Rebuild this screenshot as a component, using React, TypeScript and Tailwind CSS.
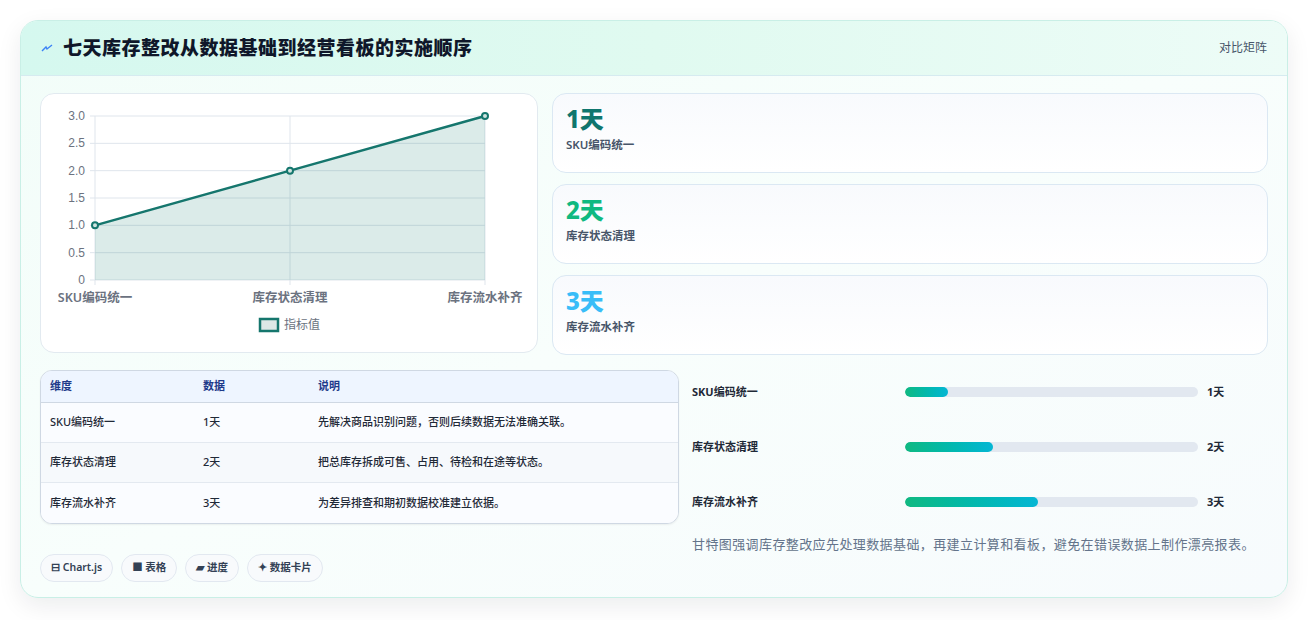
import React from "react";

const F = { fontFamily: '"Noto Sans", "Noto Sans CJK SC", sans-serif' };

function Chart() {
  const x0 = 54, x1 = 444, yTop = 22, yBot = 186;
  const ys = [3, 2.5, 2, 1.5, 1, 0.5, 0];
  const yp = (v: number) => yBot - (v / 3) * (yBot - yTop);
  const xs = [x0, (x0 + x1) / 2, x1];
  const vals = [1, 2, 3];
  const pts = xs.map((x, i) => `${x},${yp(vals[i])}`).join(" ");
  return (
    <svg width="498" height="260" className="block">
      {ys.map((v) => (
        <g key={v}>
          <line x1={x0 - 5} x2={x1} y1={yp(v)} y2={yp(v)} stroke="#dfe5ec" strokeWidth="1" />
          <text x={x0 - 10} y={yp(v) + 4} textAnchor="end" fontSize="12" fill="#6b7280" fontFamily="Liberation Sans, sans-serif">
            {v === 0 ? "0" : v.toFixed(1)}
          </text>
        </g>
      ))}
      {xs.map((x) => (
        <line key={x} x1={x} x2={x} y1={yTop} y2={yBot + 5} stroke="#dfe5ec" strokeWidth="1" />
      ))}
      <polygon points={`${x0},${yBot} ${pts} ${x1},${yBot}`} fill="rgba(15,118,110,0.15)" />
      <polyline points={pts} fill="none" stroke="#15766d" strokeWidth="2.5" />
      {xs.map((x, i) => (
        <circle key={i} cx={x} cy={yp(vals[i])} r="3" fill="#cfe3df" stroke="#15766d" strokeWidth="2" />
      ))}
      {["SKU编码统一", "库存状态清理", "库存流水补齐"].map((t, i) => (
        <text key={t} x={xs[i]} y={208} textAnchor="middle" fontSize="12.5" fontWeight="600" fill="#6b7280" fontFamily='"Noto Sans", "Noto Sans CJK SC", sans-serif'>
          {t}
        </text>
      ))}
      <rect x="219" y="225" width="18" height="12" fill="#dde8e6" stroke="#15766d" strokeWidth="2.5" />
      <text x="243" y="235" fontSize="12" fill="#6b7280" fontFamily='"Noto Sans", "Noto Sans CJK SC", sans-serif'>指标值</text>
    </svg>
  );
}

const stats = [
  { v: "1天", l: "SKU编码统一", c: "text-[#0f766e]" },
  { v: "2天", l: "库存状态清理", c: "text-[#10b981]" },
  { v: "3天", l: "库存流水补齐", c: "text-[#38bdf8]" },
];
const rows = [
  ["SKU编码统一", "1天", "先解决商品识别问题，否则后续数据无法准确关联。"],
  ["库存状态清理", "2天", "把总库存拆成可售、占用、待检和在途等状态。"],
  ["库存流水补齐", "3天", "为差异排查和期初数据校准建立依据。"],
];
const bars = [
  ["SKU编码统一", "1天", 14.7],
  ["库存状态清理", "2天", 30],
  ["库存流水补齐", "3天", 45.4],
] as const;

export default function App() {
  return (
    <div className="w-[1309px] h-[620px] bg-white pt-[20px] pl-[20px]" style={F}>
      <div className="w-[1268px] h-[578px] rounded-[18px] border border-[#c9efe6] overflow-hidden bg-gradient-to-br from-[#f2fdf9] via-[#f8fefc] to-[#f7fbfd] shadow-[0_8px_24px_rgba(15,23,42,0.08)]">
        <div className="h-[55px] flex items-center justify-between px-[20px] bg-gradient-to-r from-[#d5f8ef] via-[#e0faf0] to-[#edfcf7] border-b border-[#d6ebf0]">
          <div className="flex items-center gap-[10px]">
            <svg width="12" height="10" viewBox="0 0 12 10"><path d="M1 8 L5 4 L6 6 L11 2" fill="none" stroke="#3b82f6" strokeWidth="1.4" /></svg>
            <span className="text-[19px] font-extrabold tracking-[0.5px] text-[#0f172a]">七天库存整改从数据基础到经营看板的实施顺序</span>
          </div>
          <span className="text-[12px] text-[#475569]">对比矩阵</span>
        </div>
        <div className="px-[19px] pt-[17px]">
          <div className="flex gap-[14px]">
            <div className="w-[498px] h-[260px] bg-white rounded-[14px] border border-[#e2eaf0]">
              <Chart />
            </div>
            <div className="flex-1 flex flex-col gap-[11px]">
              {stats.map((s) => (
                <div key={s.v} className="h-[80px] rounded-[14px] border border-[#dbe8f3] bg-gradient-to-b from-[#f8fafd] to-white px-[13px] pt-[10px]">
                  <div className={`text-[24px] leading-[30px] font-extrabold ${s.c}`}>{s.v}</div>
                  <div className="text-[11.5px] font-semibold text-[#475569] mt-[2px]">{s.l}</div>
                </div>
              ))}
            </div>
          </div>
          <div className="flex gap-[13px] mt-[15px]">
            <div className="w-[639px] shrink-0">
              <div className="rounded-[12px] border border-[#cfd8e3] overflow-hidden bg-white shadow-[0_1px_2px_rgba(0,0,0,0.06)]">
                <div className="h-[32px] flex items-center bg-[#eef5ff] border-b border-[#cfd8e3] text-[11px] font-semibold text-[#1e3a8a]">
                  <div className="w-[162px] pl-[9px]">维度</div>
                  <div className="w-[115px]">数据</div>
                  <div>说明</div>
                </div>
                {rows.map((r, i) => (
                  <div key={i} className={`h-[40px] flex items-center text-[11px] font-medium text-[#1f2937] ${i < 2 ? "border-b border-[#e3e9f0]" : ""} ${i % 2 === 0 ? "bg-[#fafcff]" : "bg-[#f6f9fc]"}`}>
                    <div className="w-[162px] pl-[9px]">{r[0]}</div>
                    <div className="w-[115px]">{r[1]}</div>
                    <div>{r[2]}</div>
                  </div>
                ))}
              </div>
              <div className="flex gap-[8px] mt-[30px]">
                {["⊟ Chart.js", "■ 表格", "▰ 进度", "✦ 数据卡片"].map((c) => (
                  <span key={c} className="h-[28px] px-[10px] flex items-center rounded-full border border-[#e2e8f0] bg-[#f8fafc] text-[10.5px] font-semibold text-[#334155]">{c}</span>
                ))}
              </div>
            </div>
            <div className="flex-1 pt-[14px]">
              {bars.map(([l, v, p]) => (
                <div key={l} className="h-[55px] flex items-start">
                  <div className="w-[213px] text-[11px] font-bold text-[#1f2937] leading-[16px]">{l}</div>
                  <div className="w-[293px] h-[10px] mt-[3px] rounded-full bg-[#e2e8f0] overflow-hidden">
                    <div className="h-full rounded-full bg-gradient-to-r from-[#10b981] to-[#06b6d4]" style={{ width: `${p}%` }} />
                  </div>
                  <div className="ml-[9px] text-[11px] font-bold text-[#1f2937] leading-[16px]">{v}</div>
                </div>
              ))}
              <div className="text-[13px] tracking-[0.4px] text-[#64748b] mt-[-14px]">甘特图强调库存整改应先处理数据基础，再建立计算和看板，避免在错误数据上制作漂亮报表。</div>
            </div>
          </div>
        </div>
      </div>
    </div>
  );
}
